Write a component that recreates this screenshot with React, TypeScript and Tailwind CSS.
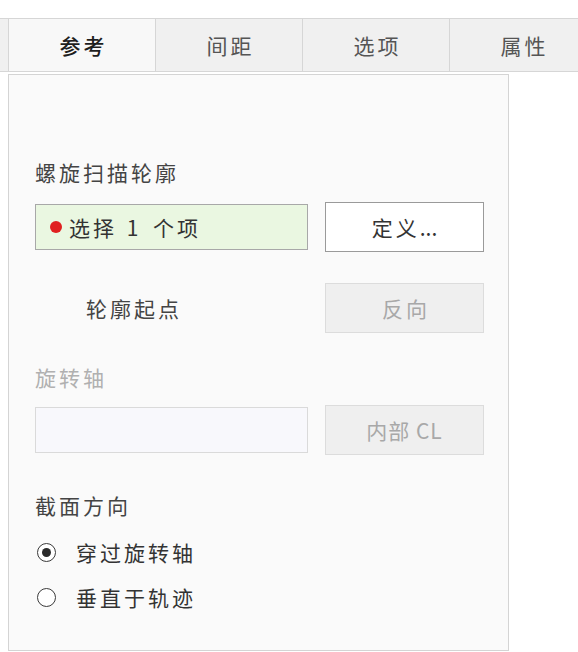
const tabs = ["参考", "间距", "选项", "属性"];

const Radio = ({ checked, label }: { checked?: boolean; label: string }) => (
  <div className="flex items-center h-[28px]">
    <span className="ml-[2px] w-[19px] h-[19px] rounded-full border-[1.5px] border-[#3a3a3a] bg-white flex items-center justify-center">
      {checked && <span className="w-[9px] h-[9px] rounded-full bg-[#2a2a2a]" />}
    </span>
    <span className="ml-[20px] text-[#333]">{label}</span>
  </div>
);

export default function App() {
  return (
    <div
      className="w-[578px] h-[652px] bg-white overflow-hidden text-[21px] leading-[28px] tracking-[3px]"
      style={{ fontFamily: '"Noto Sans CJK SC", "Noto Sans", sans-serif' }}
    >
      {/* 选项卡 */}
      <div className="mt-[18px] h-[54px] border-y border-[#d6d6d6] bg-[#f0f0f0] flex pl-[8px]">
        {tabs.map((t, i) => (
          <div
            key={t}
            className={
              "w-[147px] shrink-0 border-l border-[#d6d6d6] flex items-center justify-center pl-[3px] " +
              (i === 0 ? "bg-[#f8f8f8] text-[#1e1e1e] font-medium" : "text-[#555]")
            }
          >
            {t}
          </div>
        ))}
      </div>

      {/* 面板 */}
      <div className="ml-[8px] mt-[2px] w-[501px] h-[577px] border border-[#d4d4d4] bg-[#fafafa] pl-[26px] pt-[83px] text-[#444]">
        <div>螺旋扫描轮廓</div>

        <div className="mt-[16px] flex items-center">
          <div className="w-[273px] h-[46px] border border-[#a8a8a8] bg-[#eaf7e1] flex items-center pl-[14px]">
            <span className="w-[12px] h-[12px] rounded-full bg-[#e02020]" />
            <span className="ml-[7px] text-[#333]">
              选择<span className="tracking-[5px]"> 1 </span>个项
            </span>
          </div>
          <button className="ml-[17px] w-[159px] h-[50px] border border-[#9a9a9a] bg-white text-[#333]">
            定义<span className="tracking-[0px]">...</span>
          </button>
        </div>

        <div className="mt-[31px] flex items-center">
          <div className="w-[273px] pl-[51px]">轮廓起点</div>
          <button className="ml-[17px] w-[159px] h-[50px] border border-[#dcdcdc] bg-[#efefef] text-[#a8a8a8] pl-[3px]">
            反向
          </button>
        </div>

        <div className="mt-[30px] text-[#b0b0b0]">旋转轴</div>

        <div className="mt-[14px] flex items-center">
          <div className="w-[273px] h-[46px] border border-[#dadada] bg-[#f8f8fc]" />
          <button className="ml-[17px] w-[159px] h-[50px] border border-[#dcdcdc] bg-[#efefef] text-[#a8a8a8] tracking-[1px]">
            内部 CL
          </button>
        </div>

        <div className="mt-[36px]">截面方向</div>

        <div className="mt-[19px] flex flex-col gap-[17px]">
          <Radio checked label="穿过旋转轴" />
          <Radio label="垂直于轨迹" />
        </div>
      </div>
    </div>
  );
}
